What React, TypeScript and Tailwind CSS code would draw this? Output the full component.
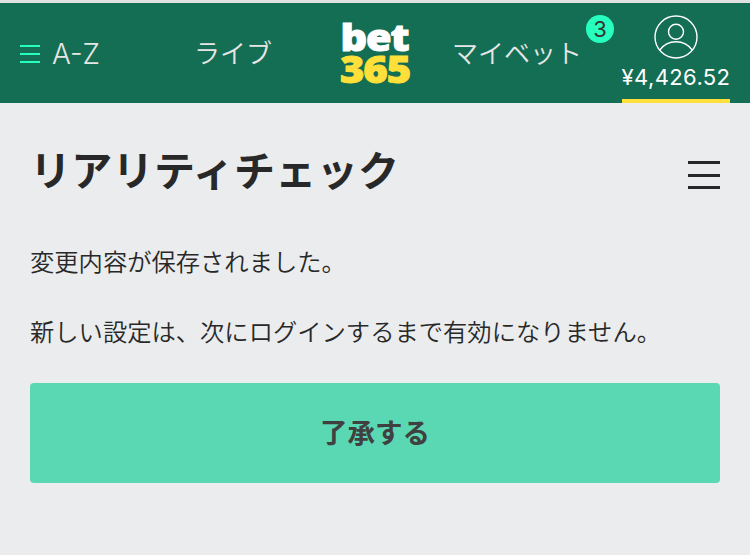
import type { ReactNode } from "react";

function NavItem({ className = "", children }: { className?: string; children: ReactNode }) {
  return (
    <a className={`block whitespace-nowrap text-[26px] leading-[40px] font-[350] text-[#e6e6e6] ${className}`}>
      {children}
    </a>
  );
}

function Logo() {
  return (
    <svg width="74" height="66" viewBox="0 0 74 66" className="overflow-visible font-['Noto_Sans','Open_Sans',sans-serif] font-black">
      <text x="0.5" y="30.5" fontSize="37" fill="#fff" stroke="#fff" strokeWidth="1" letterSpacing="-1" textLength="68" lengthAdjust="spacingAndGlyphs">
        bet
      </text>
      <text x="0" y="62.5" fontSize="36.5" fill="#ffdf39" stroke="#ffdf39" strokeWidth="1" letterSpacing="-1" textLength="70" lengthAdjust="spacingAndGlyphs">
        365
      </text>
    </svg>
  );
}

function AccountIcon() {
  return (
    <svg width="44" height="44" viewBox="0 0 44 44" fill="none" stroke="#fff" strokeWidth="1.4">
      <circle cx="22" cy="22" r="21" />
      <circle cx="22" cy="16.8" r="7.5" />
      <path d="M5.8 35.2C9.4 30 15.2 26.8 22 26.8s12.6 3.2 16.2 8.4" />
    </svg>
  );
}

export default function App() {
  return (
    <div className="min-h-screen bg-[#ebeced] font-['Inter','Noto_Sans_CJK_JP',sans-serif] text-[#282828]">
      <header className="flex h-[103px] items-start border-t-[3px] border-[#e1e1e1] bg-[#146e53]">
        <div className="flex w-[194px] items-center pt-[30px] pl-5">
          <div className="mr-[12px] flex flex-col gap-[6px]">
            <span className="h-[2px] w-5 bg-[#26ffbe]" />
            <span className="h-[2px] w-5 bg-[#26ffbe]" />
            <span className="h-[2px] w-5 bg-[#26ffbe]" />
          </div>
          <NavItem className="pt-px text-[28px]">A-Z</NavItem>
        </div>
        <div className="w-[146px] pt-[31px]">
          <NavItem>ライブ</NavItem>
        </div>
        <div className="w-[112px] pt-[17px]">
          <Logo />
        </div>
        <div className="relative w-[170px] pt-[31px]">
          <NavItem>マイベット</NavItem>
          <span className="absolute top-[12px] left-[134px] flex size-7 items-center justify-center rounded-full bg-[#26ffbe] text-[22px] leading-none text-[#333]">
            3
          </span>
        </div>
        <div className="flex h-[100px] w-[108px] flex-col items-center border-b-4 border-[#ffdf39] pt-3">
          <AccountIcon />
          <span className="mt-[4px] text-[22px] leading-[28px] font-[380] tracking-[0.4px] whitespace-nowrap text-white">
            ¥4,426.52
          </span>
        </div>
      </header>

      <main className="px-[30px]">
        <div className="flex items-start justify-between pt-[38px]">
          <h1 className="text-[41px] leading-[60px] font-bold tracking-[0.3px]">リアリティチェック</h1>
          <div className="mt-[20px] flex flex-col gap-[9.5px]">
            <span className="h-[3px] w-8 bg-[#282828]" />
            <span className="h-[3px] w-8 bg-[#282828]" />
            <span className="h-[3px] w-8 bg-[#282828]" />
          </div>
        </div>
        <p className="mt-[41px] text-[24.3px] leading-[40px] font-[350]">変更内容が保存されました。</p>
        <p className="mt-[30px] text-[24.3px] leading-[40px] font-[350] whitespace-nowrap">
          新しい設定は、次にログインするまで有効になりません。
        </p>
        <button className="mt-[31px] h-[100px] w-full rounded-[4px] bg-[#5ad8b3] pt-px text-[27.5px] font-bold text-[#404040]">
          了承する
        </button>
      </main>
    </div>
  );
}
